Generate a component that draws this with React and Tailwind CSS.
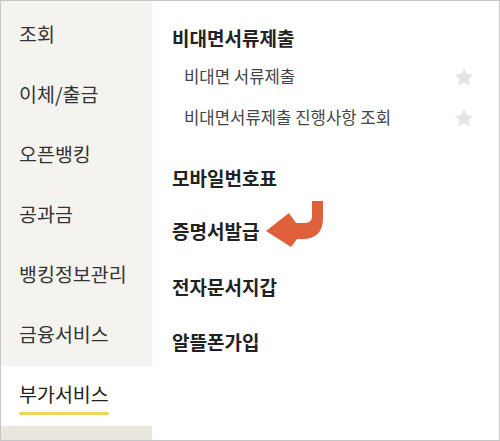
import React from "react";

const font = { fontFamily: '"Noto Sans CJK KR", "Noto Sans", sans-serif' };

function Star() {
  return (
    <svg width="22" height="22" viewBox="0 0 24 24">
      <path
        d="M12 2.2l2.95 6.6 7.15.7-5.4 4.8 1.6 7.1L12 17.7l-6.3 3.7 1.6-7.1-5.4-4.8 7.15-.7z"
        fill="#e4e4e4"
      />
    </svg>
  );
}

export default function App() {
  const left = ["조회", "이체/출금", "오픈뱅킹", "공과금", "뱅킹정보관리", "금융서비스"];
  return (
    <div className="w-[500px] h-[441px] bg-white" style={font}>
      <div className="relative w-full h-full border border-[#c6c6c6] flex">
        <div className="w-[151px] h-full flex flex-col bg-[#f4f3ef] pt-[5px]">
          {left.map((t) => (
            <div key={t} className="h-[60px] flex items-center pl-[18px] pb-[4px] text-[19.5px] text-[#333]">
              {t}
            </div>
          ))}
          <div className="h-[60px] flex items-center pl-[18px] pb-[4px] bg-white">
            <span className="relative text-[19.5px] text-[#222]">
              부가서비스
              <span className="absolute left-0 right-0 bottom-[-6px] h-[3px] rounded bg-[#f0d35a]" />
            </span>
          </div>
          <div className="flex-1 bg-[#e8e6df]" />
        </div>
        <div className="flex-1 flex flex-col pl-[20px] pr-[24px] pt-[19px]">
          <div className="h-[36px] flex items-center text-[19px] font-bold text-[#222]">비대면서류제출</div>
          <div className="h-[41px] flex items-center justify-between pl-[12px] text-[16.7px] text-[#444]">
            <span>비대면 서류제출</span>
            <Star />
          </div>
          <div className="h-[42px] flex items-center justify-between pl-[12px] text-[16.7px] text-[#444]">
            <span>비대면서류제출 진행사항 조회</span>
            <Star />
          </div>
          <div className="h-[62px] mt-[2px] flex items-center pt-[12px] text-[19px] font-bold text-[#222]">모바일번호표</div>
          <div className="h-[56px] flex items-center text-[19px] font-bold text-[#222]">증명서발급</div>
          <div className="h-[56px] flex items-center text-[19px] font-bold text-[#222]">전자문서지갑</div>
          <div className="h-[55px] flex items-center text-[19px] font-bold text-[#222]">알뜰폰가입</div>
        </div>
        <svg className="absolute left-[259px] top-[194px]" width="70" height="62" viewBox="0 0 70 62">
          <path
            d="M6 36 L29 18 L36 28 H45 Q52 28 52 21 V6 H63 V23 Q63 44 42 44 H37 L31 52 Z"
            fill="#e0603b"
          />
        </svg>
      </div>
    </div>
  );
}
